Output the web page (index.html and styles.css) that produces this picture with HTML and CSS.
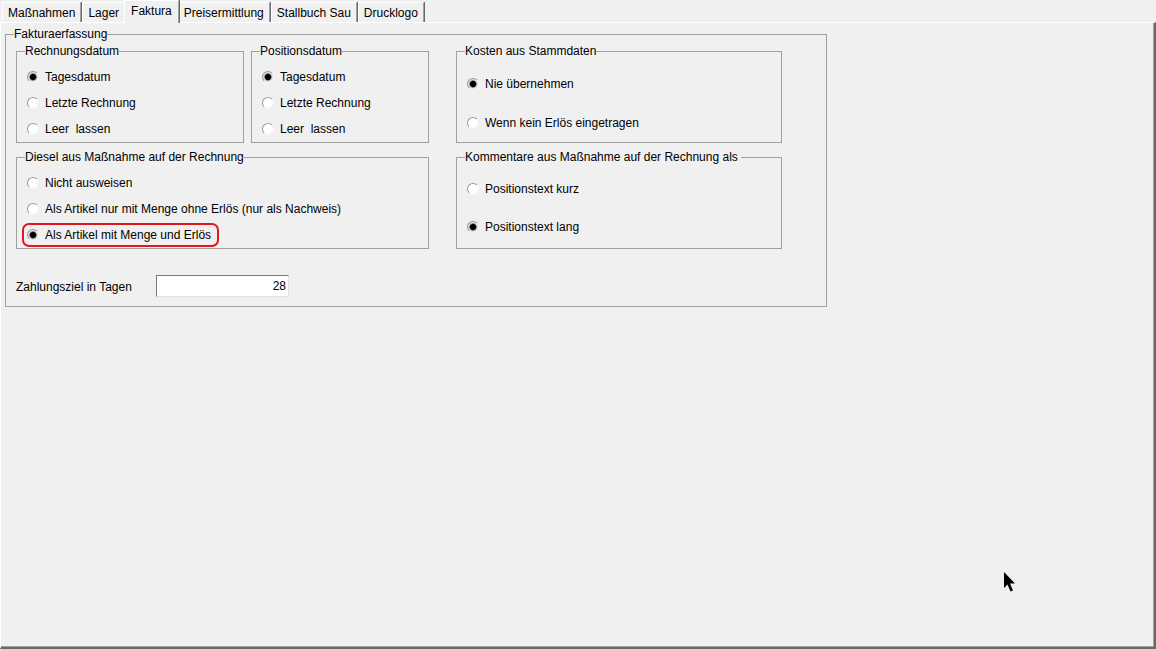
FILE: index.html
```html
<!DOCTYPE html>
<html lang="de">
<head>
    <meta charset="UTF-8">
    <title>Faktura</title>
    <link rel="stylesheet" href="styles.css">
</head>
<body>
    <div class="window">
        <!-- Tab strip -->
        <div class="tabs">
            <div class="tab">Maßnahmen</div>
            <div class="tab">Lager</div>
            <div class="tab active">Faktura</div>
            <div class="tab">Preisermittlung</div>
            <div class="tab">Stallbuch Sau</div>
            <div class="tab">Drucklogo</div>
        </div>

        <!-- Tab page -->
        <div class="panel">
            <fieldset class="group outer">
                <legend>Fakturaerfassung</legend>

                <div class="groups">
                    <fieldset class="group box">
                        <legend>Rechnungsdatum</legend>
                        <div class="opts">
                            <label class="opt"><input type="radio" name="rd" checked>Tagesdatum</label>
                            <label class="opt"><input type="radio" name="rd">Letzte Rechnung</label>
                            <label class="opt"><input type="radio" name="rd">Leer&nbsp; lassen</label>
                        </div>
                    </fieldset>

                    <fieldset class="group box">
                        <legend>Positionsdatum</legend>
                        <div class="opts">
                            <label class="opt"><input type="radio" name="pd" checked>Tagesdatum</label>
                            <label class="opt"><input type="radio" name="pd">Letzte Rechnung</label>
                            <label class="opt"><input type="radio" name="pd">Leer&nbsp; lassen</label>
                        </div>
                    </fieldset>

                    <fieldset class="group box right">
                        <legend>Kosten aus Stammdaten</legend>
                        <div class="opts two">
                            <label class="opt"><input type="radio" name="ks" checked>Nie übernehmen</label>
                            <label class="opt"><input type="radio" name="ks">Wenn kein Erlös eingetragen</label>
                        </div>
                    </fieldset>

                    <fieldset class="group box wide">
                        <legend>Diesel aus Maßnahme auf der Rechnung</legend>
                        <div class="opts">
                            <label class="opt"><input type="radio" name="ds">Nicht ausweisen</label>
                            <label class="opt"><input type="radio" name="ds">Als Artikel nur mit Menge ohne Erlös (nur als Nachweis)</label>
                            <label class="opt marked"><input type="radio" name="ds" checked>Als Artikel mit Menge und Erlös</label>
                        </div>
                    </fieldset>

                    <fieldset class="group box right">
                        <legend>Kommentare aus Maßnahme auf der Rechnung als&nbsp;</legend>
                        <div class="opts two low">
                            <label class="opt"><input type="radio" name="km">Positionstext kurz</label>
                            <label class="opt"><input type="radio" name="km" checked>Positionstext lang</label>
                        </div>
                    </fieldset>
                </div>

                <div class="field">
                    <span class="field-label">Zahlungsziel in Tagen</span>
                    <input class="num" type="text" value="28">
                </div>
            </fieldset>
        </div>

        <!-- Mouse pointer -->
        <svg class="pointer" width="13" height="20" viewBox="0 0 13 20">
            <path d="M1 0 L1 16 L4.5 12.5 L7.5 19.5 L10 18.5 L7 11.5 L12 11.5 Z" fill="#000"/>
        </svg>
    </div>
</body>
</html>
```

FILE: styles.css
```css
body {
    margin: 0;
    background: #f0f0f0;
    font-family: "Liberation Sans", Arial, sans-serif;
    font-size: 12px;
    color: #000;
}

.window {
    position: relative;
    width: 1156px;
    height: 649px;
    overflow: hidden;
}

/* Tabs */
.tabs {
    display: flex;
    align-items: flex-end;
    height: 22px;
    padding-left: 2px;
}

.tab {
    position: relative;
    height: 20px;
    line-height: 21px;
    padding: 0 5px 0 5px;
    border-left: 1px solid #fff;
    border-top: 1px solid #fff;
    border-right: 1px solid #a0a0a0;
    box-shadow: 1px 0 0 #696969;
    box-sizing: border-box;
    margin-right: 1px;
}

.tab.active {
    height: 23px;
    line-height: 20px;
    margin: 0 0 -1px -2px;
    padding: 0 6px 0 6px;
    background: #f0f0f0;
    z-index: 1;
}

.tab.active + .tab {
    margin-left: -1px;
}

/* Tab page */
.panel {
    height: 627px;
    box-sizing: border-box;
    border-top: 1px solid #fff;
    border-left: 1px solid #fff;
    border-right: 2px solid #696969;
    border-bottom: 2px solid #696969;
    box-shadow: inset -1px -1px 0 #a0a0a0;
    padding: 4px 0 0 4px;
}

/* Group boxes */
.group {
    margin: 0;
    padding: 0;
    min-inline-size: 0;
    border: 1px solid #a0a0a0;
    box-sizing: border-box;
}

.group legend {
    margin-left: 8px;
    padding: 0;
    line-height: 14px;
}

.outer {
    width: 822px;
    height: 280px;
    padding-top: 3px;
}

.groups {
    display: grid;
    grid-template-columns: 228px 178px 346px;
    column-gap: 7px;
    row-gap: 7px;
    margin-left: 10px;
}

.box {
    height: 99px;
}

.box.right {
    margin-left: 20px;
}

.box.wide {
    grid-column: 1 / 3;
}

/* Radio options */
.opts {
    display: flex;
    flex-direction: column;
    align-items: flex-start;
    gap: 10px;
    padding: 11px 0 0 9px;
}

.opts.two {
    padding-top: 18px;
    gap: 23px;
}

.opts.two.low {
    padding-top: 17px;
    gap: 22px;
}

.opt {
    display: flex;
    align-items: center;
    height: 16px;
    padding-left: 1px;
    white-space: nowrap;
}

.opt input {
    appearance: none;
    width: 12px;
    height: 12px;
    margin: 0 6px 0 0;
    border-radius: 50%;
    border: 1px solid;
    border-color: #9a9a9a #f4f4f4 #f4f4f4 #9a9a9a;
    background: #fff;
    box-sizing: border-box;
}

.opt input:checked {
    background: radial-gradient(circle, #000 0 2.6px, #555 3.2px, #dcdcdc 4px);
}

.opt.marked {
    padding-right: 4px;
    border-radius: 3px;
    outline: 2px solid #e2161f;
    outline-offset: 2px;
}

/* Payment term */
.field {
    display: flex;
    align-items: center;
    margin-top: 26px;
    margin-left: 10px;
}

.field-label {
    width: 140px;
    margin-top: 2px;
}

.num {
    width: 133px;
    height: 22px;
    box-sizing: border-box;
    border: 1px solid;
    border-color: #7a7a7a #e3e3e3 #e3e3e3 #7a7a7a;
    background: #fff;
    padding: 0 2px;
    text-align: right;
    font-family: inherit;
    font-size: 12px;
}

.pointer {
    position: absolute;
    left: 1003px;
    top: 572px;
}
```
